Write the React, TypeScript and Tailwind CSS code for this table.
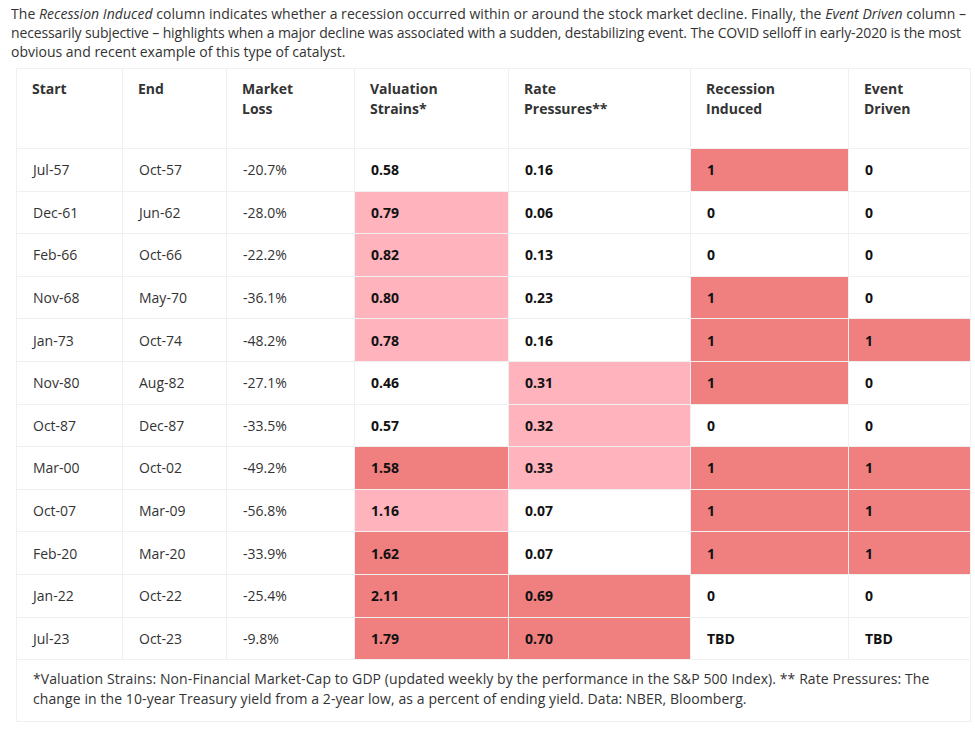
import React from "react";

// Colores de celdas
const LIGHT = "bg-[#ffb3bc]";
const DARK = "bg-[#f08080]";

type Row = {
  start: string;
  end: string;
  loss: string;
  val: string;
  valC?: string;
  rate: string;
  rateC?: string;
  rec: string;
  recC?: string;
  ev: string;
  evC?: string;
};

const rows: Row[] = [
  { start: "Jul-57", end: "Oct-57", loss: "-20.7%", val: "0.58", rate: "0.16", rec: "1", recC: DARK, ev: "0" },
  { start: "Dec-61", end: "Jun-62", loss: "-28.0%", val: "0.79", valC: LIGHT, rate: "0.06", rec: "0", ev: "0" },
  { start: "Feb-66", end: "Oct-66", loss: "-22.2%", val: "0.82", valC: LIGHT, rate: "0.13", rec: "0", ev: "0" },
  { start: "Nov-68", end: "May-70", loss: "-36.1%", val: "0.80", valC: LIGHT, rate: "0.23", rec: "1", recC: DARK, ev: "0" },
  { start: "Jan-73", end: "Oct-74", loss: "-48.2%", val: "0.78", valC: LIGHT, rate: "0.16", rec: "1", recC: DARK, ev: "1", evC: DARK },
  { start: "Nov-80", end: "Aug-82", loss: "-27.1%", val: "0.46", rate: "0.31", rateC: LIGHT, rec: "1", recC: DARK, ev: "0" },
  { start: "Oct-87", end: "Dec-87", loss: "-33.5%", val: "0.57", rate: "0.32", rateC: LIGHT, rec: "0", ev: "0" },
  { start: "Mar-00", end: "Oct-02", loss: "-49.2%", val: "1.58", valC: DARK, rate: "0.33", rateC: LIGHT, rec: "1", recC: DARK, ev: "1", evC: DARK },
  { start: "Oct-07", end: "Mar-09", loss: "-56.8%", val: "1.16", valC: LIGHT, rate: "0.07", rec: "1", recC: DARK, ev: "1", evC: DARK },
  { start: "Feb-20", end: "Mar-20", loss: "-33.9%", val: "1.62", valC: DARK, rate: "0.07", rec: "1", recC: DARK, ev: "1", evC: DARK },
  { start: "Jan-22", end: "Oct-22", loss: "-25.4%", val: "2.11", valC: DARK, rate: "0.69", rateC: DARK, rec: "0", ev: "0" },
  { start: "Jul-23", end: "Oct-23", loss: "-9.8%", val: "1.79", valC: DARK, rate: "0.70", rateC: DARK, rec: "TBD", ev: "TBD" },
];

const headers = [
  ["Start"],
  ["End"],
  ["Market", "Loss"],
  ["Valuation", "Strains*"],
  ["Rate", "Pressures**"],
  ["Recession", "Induced"],
  ["Event", "Driven"],
];

const widths = ["w-[106px]", "w-[104px]", "w-[128px]", "w-[154px]", "w-[182px]", "w-[158px]", "w-[122px]"];

const cell = "border border-[#f0f0f0] px-4 h-[42.6px] align-middle";

export default function App() {
  return (
    <div className="bg-white min-h-[732px] overflow-hidden text-[#333] text-[14px]" style={{ fontFamily: '"Open Sans", sans-serif' }}>
      <p className="pl-[11px] pt-[4px] leading-[19px] whitespace-nowrap">
        <span className="tracking-[0.04px]">
          The <em>Recession Induced</em> column indicates whether a recession occurred within or around the stock market decline. Finally, the{" "}
          <em>Event Driven</em> column –
        </span>
        <br />
        <span className="tracking-[-0.14px]">
          necessarily subjective – highlights when a major decline was associated with a sudden, destabilizing event. The COVID selloff in early-2020 is the most
        </span>
        <br />
        obvious and recent example of this type of catalyst.
      </p>

      <table className="ml-[16px] mt-[7px] w-[954px] border-collapse table-fixed">
        <colgroup>
          {widths.map((w, i) => (
            <col key={i} className={w} />
          ))}
        </colgroup>
        <thead>
          <tr>
            {headers.map((h, i) => (
              <th key={i} className="border border-[#f0f0f0] pl-[15px] pr-4 pt-[10px] h-[80px] align-top text-left font-bold leading-[20px] text-[#333]">
                {h.map((l, j) => (
                  <div key={j}>{l}</div>
                ))}
              </th>
            ))}
          </tr>
        </thead>
        <tbody>
          {rows.map((r) => (
            <tr key={r.start}>
              <td className={cell}>{r.start}</td>
              <td className={cell}>{r.end}</td>
              <td className={cell}>{r.loss}</td>
              <td className={`${cell} font-bold text-[#111] ${r.valC ?? ""}`}>{r.val}</td>
              <td className={`${cell} font-bold text-[#111] ${r.rateC ?? ""}`}>{r.rate}</td>
              <td className={`${cell} font-bold text-[#111] ${r.recC ?? ""}`}>{r.rec}</td>
              <td className={`${cell} font-bold text-[#111] ${r.evC ?? ""}`}>{r.ev}</td>
            </tr>
          ))}
          <tr>
            <td colSpan={7} className="border border-[#f0f0f0] px-4 pt-[9px] pb-[12px] leading-[20px] text-[#333] tracking-[0.09px]">
              *Valuation Strains: Non-Financial Market-Cap to GDP (updated weekly by the performance in the S&amp;P 500 Index). ** Rate Pressures: The change in the 10-year Treasury yield from a 2-year low, as a percent of ending yield. Data: NBER, Bloomberg.
            </td>
          </tr>
        </tbody>
      </table>
    </div>
  );
}
